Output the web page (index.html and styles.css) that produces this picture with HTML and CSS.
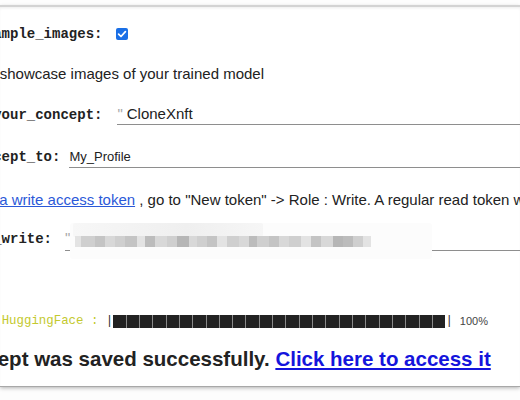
FILE: index.html
```html
<!DOCTYPE html>
<html lang="en">
<head>
<meta charset="utf-8">
<title>Upload to Hugging Face</title>
<link rel="stylesheet" href="styles.css">
</head>
<body>
<div class="cell">
  <div class="form">
    <div class="row r1">
      <span class="label">Upload_sample_images:</span>
      <span class="check"><svg width="12" height="12" viewBox="0 0 12 12"><rect x="0" y="0" width="12" height="12" rx="2" fill="#1a6fe6"/><path d="M2.6 6.2 L5 8.5 L9.4 3.6" fill="none" stroke="#fff" stroke-width="1.7" stroke-linecap="round" stroke-linejoin="round"/></svg></span>
    </div>
    <div class="desc d1">Upload showcase images of your trained model</div>
    <div class="row r3">
      <span class="label">Name_of_your_concept:</span>
      <span class="field text"><span class="quote">"</span><span class="value">CloneXnft</span></span>
    </div>
    <div class="row r4">
      <span class="label">Save_concept_to:</span>
      <span class="field select"><span class="value small">My_Profile</span></span>
    </div>
    <div class="desc d2"><a class="link" href="#">Create a write access token</a> , go to "New token" -&gt; Role : Write. A regular read token won't work here.</div>
    <div class="row r5">
      <span class="label">hf_token_write:</span>
      <span class="field text token"><span class="quote">"</span><span class="value">&nbsp;</span>
        <span class="blur">
          <span class="haze"></span>
          <span class="haze-top"></span>
          <span class="mosaic">
            <i class="m4 w6"></i><i class="m2 w14"></i><i class="m1 w10"></i><i class="m3 w10"></i><i class="m2 w10"></i><i class="m1 w12"></i><i class="m4 w8"></i><i class="m5 w10"></i><i class="m3 w12"></i><i class="m2 w10"></i><i class="m6 w12"></i><i class="m3 w8"></i><i class="m2 w10"></i><i class="m1 w10"></i><i class="m4 w10"></i><i class="m2 w12"></i><i class="m3 w10"></i><i class="m5 w8"></i><i class="m2 w12"></i><i class="m1 w10"></i><i class="m3 w10"></i><i class="m2 w12"></i><i class="m4 w10"></i><i class="m1 w10"></i><i class="m3 w12"></i><i class="m6 w10"></i><i class="m5 w10"></i><i class="m2 w10"></i><i class="m4 w8"></i>
          </span>
        </span>
      </span>
    </div>
  </div>
  <div class="output">
    <div class="progress"><span class="hf">Uploading to HuggingFace :</span><span class="sp"> </span><span class="pipe">|</span><span class="bar"><i></i><i></i><i></i><i></i><i></i><i></i><i></i><i></i><i></i><i></i><i></i><i></i><i></i><i></i><i></i><i></i><i></i><i></i><i></i><i></i><i></i><i></i><i></i><i></i><i></i></span><span class="pipe">|</span><span class="pct">100%</span></div>
    <div class="done">Your concept was saved successfully. <a class="access" href="#">Click here to access it</a></div>
  </div>
</div>
</body>
</html>
```
FILE: styles.css
```css
* { box-sizing: border-box; }
html, body { margin: 0; padding: 0; }
body {
  width: 520px;
  height: 400px;
  overflow: hidden;
  background: #fdfdfd;
  font-family: "Liberation Sans", Arial, sans-serif;
  color: #212121;
}
.cell {
  margin-top: 5px;
  height: 381px;
  background: #fff;
  border-top: 2px solid #d3d3d3;
  box-shadow: inset 0 2px 3px -1px rgba(0,0,0,0.08), 0 1px 0 #a8a8a8, 0 2px 4px rgba(0,0,0,0.3);
  overflow: hidden;
}
.form {
  margin-left: -74px;
  padding-top: 17px;
}
.row {
  display: flex;
  align-items: baseline;
  white-space: nowrap;
}
.label {
  font-family: "Liberation Mono", "Courier New", monospace;
  font-weight: bold;
  font-size: 14px;
  line-height: 20px;
  color: #222;
}
.r1 { height: 20px; align-items: center; }
.check { display: flex; margin-left: 14px; }
.desc {
  font-size: 15px;
  line-height: 20px;
  padding-left: 22px;
  white-space: nowrap;
  color: #222;
}
.d1 { margin-top: 20px; }
.d2 { margin-top: 22px; padding-left: 24px; }
.link { color: #2b59d8; text-decoration: underline; }
.r3 { margin-top: 20px; }
.r4 { margin-top: 22px; }
.r5 { margin-top: 18px; }
.field {
  flex: 1;
  display: flex;
  align-items: baseline;
  border-bottom: 1px solid #8e8e8e;
  line-height: 20px;
  font-size: 15px;
}
.text { margin-left: 15px; }
.select { margin-left: 9px; }
.quote { color: #a8a8a8; font-size: 15px; margin-right: 4px; }
.value { color: #212121; }
.small { font-size: 13px; }
.token { position: relative; padding-bottom: 2px; margin-left: 13px; }
.blur {
  position: absolute;
  left: 5px;
  top: -5px;
  width: 362px;
  height: 36px;
}
.haze {
  position: absolute;
  inset: 0;
  background: #fcfcfc;
  border-radius: 3px;
}
.haze-top {
  position: absolute;
  left: 3px;
  top: 0;
  width: 190px;
  height: 14px;
  background: linear-gradient(90deg, #f7f7f7, #efefef 60%, #f6f6f6);
  border-radius: 2px;
}
.mosaic {
  position: absolute;
  left: 5px;
  top: 13px;
  height: 11px;
  display: flex;
}
.mosaic i { display: block; height: 11px; }
.m1 { background: #c4c4c4; }
.m2 { background: #cfcfcf; }
.m3 { background: #d8d8d8; }
.m4 { background: #e3e3e3; }
.m5 { background: #bcbcbc; }
.m6 { background: #b6b6b6; }
.w6 { width: 6px; }
.w8 { width: 8px; }
.w10 { width: 10px; }
.w12 { width: 12px; }
.w14 { width: 14px; }
.output {
  margin-left: -95px;
  margin-top: 64px;
}
.progress {
  display: flex;
  align-items: center;
  height: 13px;
  white-space: nowrap;
  font-family: "Liberation Mono", "Courier New", monospace;
  font-size: 12.4px;
  line-height: 13px;
}
.hf { color: #c3c92e; }
.sp { white-space: pre; }
.pipe { color: #333; }
.bar {
  display: flex;
  gap: 1px;
  height: 13px;
  background: #8a8a8a;
}
.bar i { display: block; width: 12.33px; height: 13px; background: #222; }
.pct {
  margin-left: 7px;
  font-family: "Liberation Sans", Arial, sans-serif;
  font-size: 11px;
  color: #444;
}
.done {
  margin-left: -6px;
  margin-top: 19px;
  font-size: 20.5px;
  line-height: 24px;
  font-weight: bold;
  color: #222;
  white-space: nowrap;
}
.access { color: #1414dc; text-decoration: underline; }
```
